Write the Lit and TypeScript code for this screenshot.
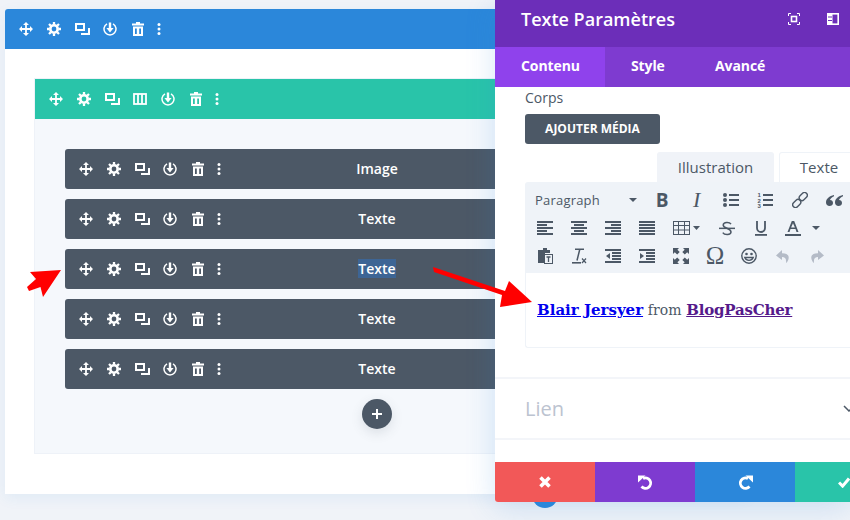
import { LitElement, html, css, svg } from "lit";
import { customElement } from "lit/decorators.js";

const ic = (w: number, h: number, body: unknown, cls = "") =>
  html`<svg class=${cls} width=${w} height=${h} viewBox="0 0 ${w} ${h}" fill="none" stroke="none">${body}</svg>`;

const move = ic(14, 14, svg`<path fill="#fff" d="M7 0L10 3H7.900V6.100H11V4L14 7L11 10V7.900H7.900V11H10L7 14L4 11H6.100V7.900H3V10L0 7L3 4V6.100H6.100V3H4Z"/>`);
const gear = ic(14, 14, svg`<circle cx="7" cy="7" r="3.700" stroke="#fff" stroke-width="2.600"/><path stroke="#fff" stroke-width="2.300" d="M7 0v2.400M7 11.600V14M0 7h2.400M11.600 7H14M2 2l1.800 1.800M10.200 10.200L12 12M2 12l1.800-1.800M10.200 3.800L12 2"/>`);
const dup = ic(15, 12, svg`<rect x="1" y="1" width="8" height="6" stroke="#fff" stroke-width="2"/><path stroke="#fff" stroke-width="2" d="M14 5v6H6"/>`);
const cols = ic(14, 12, svg`<rect x="1" y="1" width="12" height="10" stroke="#fff" stroke-width="1.800"/><path stroke="#fff" stroke-width="1.800" d="M5 1v10M9 1v10"/>`);
const save = ic(14, 14, svg`<path stroke="#fff" stroke-width="1.500" d="M4 1.800a6 6 0 1 0 6 0"/><path fill="#fff" d="M5.800 .5h2.400v5.500h2.400L7 10.500 3.400 6h2.400z"/>`);
const trash = ic(12, 14, svg`<path fill="#fff" fill-rule="evenodd" d="M4 0h4v1.400h4v2H0v-2h4zM1 4.600h10V14H1zM3 6.600v5.400h1.800V6.600zM7.200 6.600v5.400H9V6.600z"/>`);
const dots = ic(4, 12, svg`<circle cx="2" cy="1.600" r="1.500" fill="#fff"/><circle cx="2" cy="6" r="1.500" fill="#fff"/><circle cx="2" cy="10.400" r="1.500" fill="#fff"/>`);

const D = "#4c5866";
const tb = (w: number, h: number, body: unknown) => ic(w, h, body, "ti");
const lines = (rows: [number, number][], w = 16) =>
  tb(w, 15, rows.map(([x, l], i) => svg`<rect x=${x} y=${i * 3} width=${l} height="2" fill=${D} />`));

const toolbar1 = [
  html`<span class="gb">B</span>`,
  html`<span class="gi">I</span>`,
  tb(16, 14, svg`<g fill=${D}><circle cx="2" cy="2" r="2"/><circle cx="2" cy="7" r="2"/><circle cx="2" cy="12" r="2"/><rect x="6" y="1" width="10" height="2"/><rect x="6" y="6" width="10" height="2"/><rect x="6" y="11" width="10" height="2"/></g>`),
  tb(16, 16, svg`<g fill=${D} font-size="6" font-weight="700" font-family="'Liberation Sans',sans-serif"><text x="0.5" y="5">1</text><text x="0.5" y="10.500">2</text><text x="0.5" y="16">3</text><rect x="6" y="2" width="10" height="2"/><rect x="6" y="7" width="10" height="2"/><rect x="6" y="12" width="10" height="2"/></g>`),
  tb(16, 16, svg`<g stroke=${D} stroke-width="1.400" fill="none"><rect x="8.500" y="0" width="5.500" height="9" rx="2.700" transform="rotate(45 11.250 4.500)"/><rect x="2" y="7" width="5.500" height="9" rx="2.700" transform="rotate(45 4.750 11.500)"/></g>`),
  tb(17, 11, svg`<path fill=${D} d="M8 0C3.500 1 0 3.500 0 7.500 0 9.600 1.500 11 3.500 11S7 9.700 7 8 5.800 5 4 5c.3-1.500 2-3 4-3.800zM17 0c-4.500 1-8 3.500-8 7.500 0 2.100 1.500 3.500 3.500 3.500S16 9.700 16 8s-1.200-3-3-3c.3-1.500 2-3 4-3.800z"/>`),
];
const tableIcon = ic(27, 14, svg`<rect x=".5" y=".5" width="16" height="13" stroke=${D}/><path stroke=${D} d="M.5 4.500h16M.5 9h16M5.500.5v13M11.500.5v13"/><path fill=${D} d="M20 5h7l-3.500 4z"/>`, "ti");
const strike = ic(16, 15, svg`<g><path stroke=${D} stroke-width="1.500" d="M12 3.200C10.500.8 4.500.8 4.200 4c-.2 3.600 7.800 3 7.800 7 0 3.200-6.600 3.200-8.200.6"/><rect y="6.600" width="16" height="1.500" fill=${D}/></g>`, "ti");
const under = tb(12, 15, svg`<path stroke=${D} stroke-width="1.800" d="M2 0v7a4 4 0 0 0 8 0V0"/><rect y="13" width="12" height="1.800" fill=${D}/>`);
const color = tb(16, 15, svg`<path fill=${D} fill-rule="evenodd" d="M6.800 0h2.400L13.500 11h-2l-1-2.900h-5L4.500 11h-2zM8 2.200L6.100 6.500h3.800z"/><rect y="13" width="16" height="2" fill=${D}/>`);
const caret = ic(8, 4, svg`<path fill=${D} d="M0 0h8L4 4z"/>`, "ti");

const row3 = [
  tb(15, 16, svg`<path fill=${D} d="M2 2h3V0h4v2h3v3H7v10H0V2z"/><rect x="6.500" y="6.500" width="8" height="9" fill="#eff3f8" stroke=${D}/><path stroke=${D} stroke-width="1.300" d="M8.500 9h4M10.500 9v5"/>`),
  tb(15, 16, svg`<path stroke=${D} stroke-width="1.500" d="M3 1.200h9M7.800 1.200L5 12.500"/><rect y="14" width="9" height="1.600" fill=${D}/><path stroke=${D} stroke-width="1.200" d="M10 10.500l4 4.500M14 10.500l-4 4.500"/>`),
  tb(16, 15, svg`<g fill=${D}><rect width="16" height="2"/><rect x="7" y="3" width="9" height="2"/><rect x="7" y="6" width="9" height="2"/><rect x="7" y="9" width="9" height="2"/><rect y="12" width="16" height="2"/><path d="M5 4v6L1 7z"/></g>`),
  tb(16, 15, svg`<g fill=${D}><rect width="16" height="2"/><rect x="7" y="3" width="9" height="2"/><rect x="7" y="6" width="9" height="2"/><rect x="7" y="9" width="9" height="2"/><rect y="12" width="16" height="2"/><path d="M1 4v6l4-3z"/></g>`),
  tb(16, 16, svg`<path fill=${D} d="M0 0h6L4.400 1.700l2.300 2.400-2.500 2.500-2.400-2.400L0 6zM16 0v6l-1.800-1.800-2.400 2.400-2.500-2.500 2.400-2.400L10 0zM0 16v-6l1.800 1.800 2.400-2.400 2.500 2.500-2.300 2.400L6 16zM16 16h-6l1.700-1.700-2.400-2.400 2.500-2.500 2.400 2.400L16 10z"/>`),
  html`<span class="go">Ω</span>`,
  tb(16, 16, svg`<circle cx="8" cy="8" r="7.200" stroke=${D} stroke-width="1.400"/><circle cx="5.500" cy="6" r="1.300" fill=${D}/><circle cx="10.500" cy="6" r="1.300" fill=${D}/><path stroke=${D} stroke-width="1.400" d="M3.800 9.500c1.500 3.800 6.900 3.800 8.400 0z"/>`),
  tb(14, 13, svg`<path fill="#b4bbc7" d="M6 0L0 5.500 6 10V7C9 7 10.500 8.500 10 13 13 11 15.500 3 6 3.200Z"/>`),
  tb(14, 13, svg`<path fill="#b4bbc7" d="M8 0L14 5.500 8 10V7C5 7 3.500 8.500 4 13 1 11-1.500 3 8 3.200Z"/>`),
];

@customElement("app-root")
export class AppRoot extends LitElement {
  static styles = css`
    :host { display: block; position: relative; width: 850px; height: 520px; overflow: hidden; background: #f0f3f8; font-family: "Open Sans", sans-serif; }
    .card { width: 744px; height: 485px; margin: 9px 0 0 5px; background: #fff; border-radius: 3px 3px 0 0; box-shadow: 0 4px 14px rgba(43,135,218,.08); }
    .bar { display: flex; align-items: center; height: 40px; color: #fff; position: relative; }
    .bar-blue { background: #2b87da; padding-left: 7px; border-radius: 3px 3px 0 0; }
    .bar-green { background: #29c4a9; padding-left: 7px; }
    .bar-row { background: #4c5866; border-radius: 3px; padding-left: 7px; }
    .icons { display: flex; align-items: center; }
    .slot { width: 28px; display: flex; justify-content: center; align-items: center; flex: none; }
    .slot:last-child { width: 14px; }
    .section { width: 684px; height: 374px; margin-left: 30px; background: #f5f8fc; box-shadow: 0 0 0 1px #eef2f8; }
    .sec-outer { padding-top: 30px; }
    .rows { display: flex; flex-direction: column; gap: 10px; margin: 30px 30px 0; }
    .label { position: absolute; left: 0; right: 0; text-align: center; font-size: 14px; font-weight: 600; line-height: 20px; }
    .sel { background: #3d6595; }
    .plus { width: 30px; height: 30px; border-radius: 50%; background: #4c5866; margin: 10px auto 0; display: flex; align-items: center; justify-content: center; box-shadow: 0 4px 12px rgba(76,88,102,.15); }
    .panel { position: absolute; left: 495px; top: 0; width: 355px; height: 502px; background: #fff; display: flex; flex-direction: column; box-shadow: 0 5px 30px rgba(43,135,218,.2); border-radius: 0 0 0 3px; }
    .head { height: 47px; flex: none; background: #6c2eb9; color: #fff; display: flex; align-items: center; position: relative; padding-left: 26px; box-sizing: border-box; }
    .title { font-size: 18px; font-weight: 600; line-height: 40px; margin-top: -10px; }
    .hicons { position: absolute; left: 293px; top: 13px; display: flex; gap: 27px; }
    .tabs { height: 40px; flex: none; background: #7e3bd0; display: flex; color: #fff; font-size: 14px; font-weight: 700; line-height: 38px; letter-spacing: -.1px; }
    .tab { box-sizing: border-box; padding-left: 26px; }
    .tab.on { background: #8f42ec; width: 110px; }
    .tab.s { width: 84px; }
    .body { flex: 1; padding: 0 0 0 30px; min-height: 0; }
    .corps { font-size: 14px; line-height: 20px; color: #4c5866; margin-top: 1px; }
    .btn { width: 135px; height: 30px; margin-top: 6px; background: #4c5866; color: #fff; border-radius: 3px; font-size: 12px; font-weight: 700; text-align: center; line-height: 30px; }
    .etabs { display: flex; margin: 8px 0 0 132px; height: 30px; gap: 5px; width: 223px; overflow: hidden; }
    .et { height: 30px; flex: none; font-size: 15px; color: #4c5866; text-align: center; box-sizing: border-box; border-radius: 3px 3px 0 0; line-height: 30px; }
    .et.i { width: 117px; background: #f0f3f8; }
    .et.t { width: 80px; background: #fff; border: 1px solid #eff3f8; border-bottom: 0; line-height: 28px; }
    .tools { width: 325px; height: 91px; background: #eff3f8; box-sizing: border-box; border-radius: 3px 0 0 0; padding-top: 4px; }
    .tr { display: flex; align-items: center; height: 28px; }
    .para { font-size: 13px; letter-spacing: .2px; color: #4c5866; width: 120px; padding: 0 8px 0 10px; box-sizing: border-box; flex: none; display: flex; justify-content: space-between; align-items: center; }
    .cell { width: 34px; height: 28px; flex: none; display: flex; justify-content: center; align-items: center; }
    .cell.r1 { width: 34.4px; }
    .cell.tbl { width: 46px; justify-content: flex-start; padding-left: 9px; box-sizing: border-box; }
    .cell.col { width: 30px; }
    .cell.cr { width: 16px; }
    .tr2 { padding-left: 3px; }
    .gb { font-size: 19px; font-weight: 700; color: #4c5866; line-height: 28px; }
    .gi { font-family: "Liberation Serif", serif; font-style: italic; font-size: 22px; color: #4c5866; line-height: 28px; }
    .go { font-family: "Liberation Serif", serif; font-size: 25px; color: #4c5866; line-height: 28px; }
    .editor { width: 325px; height: 75px; box-sizing: border-box; border: 1px solid #eff3f8; border-top: 0; border-right: 0; border-radius: 0 0 0 3px; padding: 26px 0 0 11px; font-family: "DejaVu Serif", serif; font-size: 15px; line-height: 22px; color: #4c5866; white-space: nowrap; overflow: hidden; }
    .editor b { text-decoration: underline; }
    .from { font-size: 14px; }
    .l1 { color: #0000ee; }
    .l2 { color: #551a8b; letter-spacing: -.2px; }
    .lien { display: flex; align-items: center; justify-content: space-between; width: 355px; box-sizing: border-box; margin: 29px 0 0 -30px; border-top: 2px solid #f3f5f9; border-bottom: 2px solid #f3f5f9; height: 63px; padding-left: 30px; color: #bcc3d0; font-size: 20px; }
    .chev { display: flex; margin-right: -5px; }
    .foot { height: 40px; flex: none; display: flex; }
    .foot div { width: 100px; flex: none; display: flex; align-items: center; justify-content: center; }
    .foot .x { background: #f25858; border-radius: 0 0 0 3px; }
    .foot .u { background: #7e3bd0; }
    .foot .r { background: #2b87da; }
    .foot .c { background: #29c4a9; width: 55px; justify-content: flex-start; padding-left: 43px; box-sizing: border-box; }
    .blue { position: absolute; left: 532px; top: 482px; width: 26px; height: 26px; border-radius: 50%; background: #2b87da; }
    .arrow { position: absolute; left: 0; top: 0; pointer-events: none; }
  `;

  private icons(list: unknown[]) {
    return html`<div class="icons">${list.map((i) => html`<span class="slot">${i}</span>`)}</div>`;
  }

  private row(t: string, sel = false) {
    return html`<div class="bar bar-row">
      ${this.icons([move, gear, dup, save, trash, dots])}
      <div class="label"><span class=${sel ? "sel" : ""}>${t}</span></div>
    </div>`;
  }

  render() {
    return html`
      <div class="card">
        <div class="bar bar-blue">${this.icons([move, gear, dup, save, trash, dots])}</div>
        <div class="sec-outer">
          <div class="section">
            <div class="bar bar-green">${this.icons([move, gear, dup, cols, save, trash, dots])}</div>
            <div class="rows">
              ${this.row("Image")}${this.row("Texte")}${this.row("Texte", true)}${this.row("Texte")}${this.row("Texte")}
            </div>
            <div class="plus">${ic(12, 12, svg`<path stroke="#fff" stroke-width="2" d="M6 1v10M1 6h10"/>`)}</div>
          </div>
        </div>
      </div>
      <div class="blue"></div>
      <aside class="panel">
        <div class="head">
          <div class="title">Texte Paramètres</div>
          <div class="hicons">
            ${ic(12, 12, svg`<path stroke="#fff" stroke-width="1" d="M.5 3V.5H3M9 .5h2.500V3M11.500 9v2.500H9M3 11.500H.5V9"/><rect x="3.500" y="3.500" width="5" height="5" stroke="#fff" stroke-width="1.600"/>`)}
            ${ic(12, 12, svg`<rect x=".8" y=".8" width="10.400" height="10.400" stroke="#fff" stroke-width="1.600"/><rect x="1" y="1" width="4.500" height="10" fill="#fff"/><path stroke="#6c2eb9" d="M1 4h4M1 7.500h4"/>`)}
          </div>
        </div>
        <div class="tabs">
          <div class="tab on">Contenu</div><div class="tab s">Style</div><div class="tab">Avancé</div>
        </div>
        <div class="body">
          <div class="corps">Corps</div>
          <div class="btn">AJOUTER MÉDIA</div>
          <div class="etabs"><div class="et i">Illustration</div><div class="et t">Texte</div></div>
          <div class="tools">
            <div class="tr">
              <div class="para"><span>Paragraph</span>${caret}</div>
              ${toolbar1.map((i) => html`<div class="cell r1">${i}</div>`)}
            </div>
            <div class="tr tr2">
              <div class="cell">${lines([[0,16],[0,10],[0,16],[0,10],[0,16]])}</div>
              <div class="cell">${lines([[0,16],[3,10],[0,16],[3,10],[0,16]])}</div>
              <div class="cell">${lines([[0,16],[6,10],[0,16],[6,10],[0,16]])}</div>
              <div class="cell">${lines([[0,16],[0,16],[0,16],[0,16],[0,16]])}</div>
              <div class="cell tbl">${tableIcon}</div>
              <div class="cell">${strike}</div>
              <div class="cell">${under}</div>
              <div class="cell col">${color}</div>
              <div class="cell cr">${caret}</div>
            </div>
            <div class="tr tr2">${row3.map((i) => html`<div class="cell">${i}</div>`)}</div>
          </div>
          <div class="editor"><b class="l1">Blair Jersyer</b> <span class="from">from</span> <b class="l2">BlogPasCher</b></div>
          <div class="lien"><span>Lien</span><span class="chev">${ic(12, 7, svg`<path stroke="#4c5866" stroke-width="1.500" d="M1 1l5 5 5-5"/>`)}</span></div>
        </div>
        <div class="foot">
          <div class="x">${ic(12, 12, svg`<path stroke="#fff" stroke-width="3.600" d="M1.500 1.500l9 9M10.500 1.500l-9 9"/>`)}</div>
          <div class="u">${ic(15, 15, svg`<path stroke="#fff" stroke-width="2.800" d="M5 3.500A5.200 5.200 0 1 1 3.500 11.500"/><path fill="#fff" d="M0 .5h7.500L0 7.500z"/>`)}</div>
          <div class="r">${ic(15, 15, svg`<path stroke="#fff" stroke-width="2.800" d="M10 3.500A5.200 5.200 0 1 0 11.500 11.500"/><path fill="#fff" d="M15 .5H7.500L15 7.500z"/>`)}</div>
          <div class="c">${ic(12, 11, svg`<path stroke="#fff" stroke-width="3" d="M1 5.500l3.600 3.600L11 1.500"/>`)}</div>
        </div>
      </aside>
      <svg class="arrow" width="850" height="520" viewBox="0 0 850 520">
        <path fill="#f00" d="M433 267L505 291L509 281L532 302L500 307L502 295L434 272Z"/>
        <path fill="#f00" d="M61 270L43 297L40.500 287L29 291L27 287L36 279L30 272Z"/>
      </svg>
    `;
  }
}
